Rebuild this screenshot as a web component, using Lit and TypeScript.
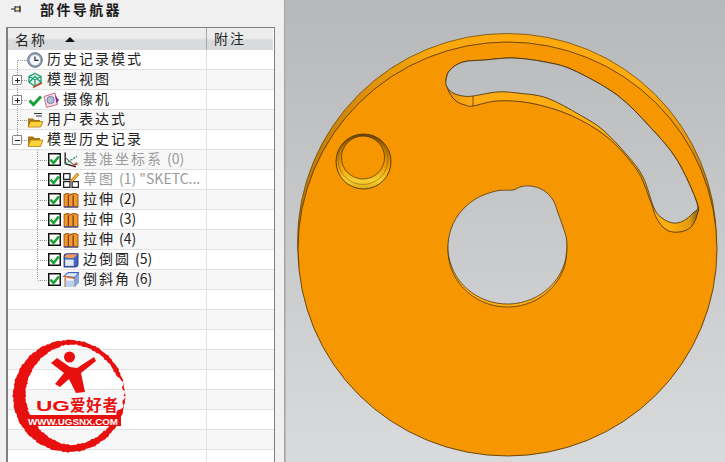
import { LitElement, html, css, svg } from "lit";
import { customElement } from "lit/decorators.js";

type Pt = [number, number];

// closed smooth curve through the points (catmull-rom to bezier)
const smooth = (p: Pt[]) => {
  const n = p.length;
  let d = `M${p[0][0]} ${p[0][1]}`;
  for (let i = 0; i < n; i++) {
    const a = p[(i - 1 + n) % n];
    const b = p[i];
    const c = p[(i + 1) % n];
    const e = p[(i + 2) % n];
    const c1x = b[0] + (c[0] - a[0]) / 6;
    const c1y = b[1] + (c[1] - a[1]) / 6;
    const c2x = c[0] - (e[0] - b[0]) / 6;
    const c2y = c[1] - (e[1] - b[1]) / 6;
    d += `C${c1x.toFixed(1)} ${c1y.toFixed(1)} ${c2x.toFixed(1)} ${c2y.toFixed(1)} ${c[0]} ${c[1]}`;
  }
  return d + "Z";
};

const slotTop: Pt[] = [
  [446, 80], [450, 70], [463, 62], [485, 60], [513, 58], [545, 62], [573, 70],
  [617, 95], [650, 127], [677, 160], [697, 203],
];
const slotBottom: Pt[] = [
  [693, 213], [683, 221], [673, 223], [662, 218], [654, 208], [643, 177], [627, 155],
  [603, 130], [580, 115], [547, 98], [517, 93], [497, 92], [473, 96], [463, 96],
  [453, 93], [447, 87],
];
const wallEdge: Pt[] = [
  [697, 215], [692, 226], [684, 231], [673, 232], [664, 228], [656, 217], [650, 200],
  [637, 170], [607, 137], [570, 115], [530, 103], [497, 101], [473, 106], [465, 105],
  [456, 101], [449, 92],
];
// centre hole: the key bump at the upper right, then a plain circle round the rest
const hole: Pt[] = [
  [513, 190], [520, 187], [530, 186], [543, 190], [553, 200], [558, 213], [563, 227],
  ...Array.from({ length: 13 }, (_, i): Pt => {
    const a = ((-5 + i * 22) * Math.PI) / 180;
    return [+(507.5 + 59.5 * Math.cos(a)).toFixed(1), +(247 + 57 * Math.sin(a)).toFixed(1)];
  }),
];

// brush ring of the logo, thick on the left and nearly gone on the right
const brushRing = () => {
  const outer: string[] = [];
  const inner: string[] = [];
  const cx = 69;
  const cy = 396;
  for (let i = 0; i <= 150; i++) {
    const a = (i / 150) * Math.PI * 2;
    const noise = Math.sin(i * 2.7) * 0.9 + Math.sin(i * 7.3) * 0.7;
    const c = Math.cos(a);
    const s = Math.sin(a);
    const left = Math.max(0, -c);
    const low = Math.max(0, s) * 2.5;
    const gap = Math.abs(Math.atan2(s, c) + 0.05) < 0.32 ? (i % 4 < 2 ? 0.2 : 2) : 4.5;
    const t = gap + left * 8 + low + noise * (gap < 3 ? 0.2 : 1);
    const r = 56 + noise * 0.5;
    outer.push(`${(cx + r * c).toFixed(1)} ${(cy + r * s).toFixed(1)}`);
    inner.unshift(`${(cx + (r - t) * c).toFixed(1)} ${(cy + (r - t) * s).toFixed(1)}`);
  }
  return `M${outer.join("L")}ZM${inner.join("L")}Z`;
};

const icons: Record<string, unknown> = {
  clock: svg`<circle cx="8" cy="8" r="7.300" fill="#8fa3b8" stroke="#5f6f84"/><circle cx="8" cy="8" r="5.300" fill="#f4f6fa"/><path d="M8 4.500V8.400H11.500" fill="none" stroke="#222" stroke-width="1.200"/>`,
  cube: svg`<path d="M8 1.500L14 4.500V10.500L8 14L2 10.500V4.500ZM2 4.500L8 7.500L14 4.500M8 7.500V14M2 10.500L8 4.500L14 10.500" fill="#d8f0e4" fill-opacity=".5" stroke="#17a06a" stroke-width="1.300"/><path d="M6 15.500L15 11" stroke="#d8402c" stroke-width="1.400"/>`,
  camera: svg`<path d="M1 4.500L12 1L14.500 12.500L3.500 15.500Z" fill="#f6dfe8" stroke="#c86a92"/><circle cx="7.500" cy="8" r="3.600" fill="#b4bfd2" stroke="#6f7fa0"/><path d="M12 3L16 8L13.500 11.500Z" fill="#7d2d96"/>`,
  check: svg`<path d="M2.500 8.500L6.500 12.500L14 4.500" fill="none" stroke="#16a035" stroke-width="3"/>`,
  exprFolder: svg`<path d="M7 1.500H15M9 4H15" stroke="#333" stroke-width="1.200"/><path d="M1 6.500H6L7.500 8H13V14.500H1Z" fill="#a8781a"/><path d="M3.500 9.500H16L13.500 15H1Z" fill="#ffd23c" stroke="#a87a10" stroke-width=".8"/>`,
  folder: svg`<path d="M1 4.500H6L7.500 6H13V14H1Z" fill="#a8781a"/><path d="M3.500 8H16L13.500 14.500H1Z" fill="#ffd23c" stroke="#a87a10" stroke-width=".8"/>`,
  datum: svg`<path d="M3 1.500V12L13 15" fill="none" stroke="#222" stroke-width="1.300"/><path d="M3 12L14 5" stroke="#1a9a50" stroke-width="1.200" stroke-dasharray="2 1"/><path d="M3 6L11 13L14 11" fill="none" stroke="#666" stroke-width="1"/><path d="M10 14L15 12" stroke="#d8402c" stroke-width="1.200"/>`,
  sketch: svg`<path d="M1.500 2.500H7.500V8H1.500ZM1.500 10H7.500V15.500H1.500ZM9.500 10H15.500V15.500H9.500Z" fill="#fff" stroke="#222" stroke-width="1.200"/><path d="M8 9L14 2L16 3.500L10 10Z" fill="#f2b52c" stroke="#b0601a" stroke-width=".7"/>`,
  extrude: svg`<path d="M2 3.500Q5 1.500 8 3.500Q11 1.500 15 3.500V15H2Z" fill="#f29a2e" stroke="#a85a16"/><path d="M6 4V14.500M10.500 4V14.500" stroke="#7a3c10" stroke-width="1.200"/><path d="M2 15H15" stroke="#3b4a90" stroke-width="1.200"/>`,
  blend: svg`<path d="M2 5Q2 2.500 5 2.500H15V12Q15 15 12 15H2Z" fill="#3f68c4" stroke="#2a3f80"/><path d="M2.500 5.500Q3 3 5 3H14.500L11 6.500H4Z" fill="#f29a5c"/><path d="M3 8H11V14H3Z" fill="#e6e9f2"/>`,
  chamfer: svg`<path d="M1.500 5L6 1.500H16L12 6Z" fill="#e8eef8" stroke="#3f68c4"/><path d="M2 5L14 7.500M3 6V15M12 6.500V15" stroke="#d8703c" stroke-width="1.400"/><path d="M3 9H12V15H3Z" fill="#9dc0ea" fill-opacity=".7"/><path d="M12 6L16 2V11L12 15" fill="#7fa6de"/>`,
};

type Row = {
  label: string;
  latin?: string;
  icon: string;
  child?: boolean;
  expander?: "plus" | "minus";
  last?: boolean;
  first?: boolean;
  mark?: boolean;
  grey?: boolean;
};

const rows: Row[] = [
  { label: "历史记录模式", icon: "clock", first: true },
  { label: "模型视图", icon: "cube", expander: "plus" },
  { label: "摄像机", icon: "camera", expander: "plus", mark: true },
  { label: "用户表达式", icon: "exprFolder" },
  { label: "模型历史记录", icon: "folder", expander: "minus", last: true },
  { label: "基准坐标系", latin: "(0)", icon: "datum", child: true, grey: true },
  { label: "草图", latin: '(1) "SKETC...', icon: "sketch", child: true, grey: true },
  { label: "拉伸", latin: "(2)", icon: "extrude", child: true },
  { label: "拉伸", latin: "(3)", icon: "extrude", child: true },
  { label: "拉伸", latin: "(4)", icon: "extrude", child: true },
  { label: "边倒圆", latin: "(5)", icon: "blend", child: true },
  { label: "倒斜角", latin: "(6)", icon: "chamfer", child: true, last: true },
  ...Array.from({ length: 9 }, () => ({ label: "", icon: "" })),
];

@customElement("app-root")
export class AppRoot extends LitElement {
  static styles = css`
    :host {
      display: block;
      width: 725px;
      height: 462px;
      overflow: hidden;
      font-family: "Noto Sans CJK SC", "Noto Sans", sans-serif;
      color: #222;
    }
    .page {
      display: flex;
      height: 462px;
    }
    .panel {
      position: relative;
      flex: none;
      width: 284px;
      background: #f0f0f0;
      box-sizing: border-box;
      padding-left: 6px;
      overflow: hidden;
    }
    .title {
      display: flex;
      align-items: center;
      height: 18px;
      margin-left: -1px;
      margin-bottom: 9px;
      font-size: 14px;
      font-weight: 700;
      letter-spacing: 2.4px;
      color: #1c1c1c;
    }
    .pin {
      width: 12px;
      height: 10px;
      margin-left: 6px;
      margin-right: 17px;
    }
    .tree {
      width: 269px;
      box-sizing: border-box;
      height: 435px;
      background: #fff;
      border: 1px solid #7f7f7f;
      border-width: 1px 1px 0 2px;
      overflow: hidden;
    }
    .head {
      display: flex;
      height: 22px;
      box-sizing: border-box;
      font-size: 14px;
      letter-spacing: 2px;
      line-height: 20px;
      background: linear-gradient(#eeeeee 0, #ececec 45%, #d9dadb 55%, #d9dadb 100%);
      margin-right: 1px;
    }
    .head .name {
      display: flex;
      align-items: center;
      width: 199px;
      padding-left: 7px;
      box-sizing: border-box;
      border-right: 1px solid #a8a8a8;
    }
    .head .note {
      padding-left: 7px;
    }
    .sort {
      width: 0;
      height: 0;
      margin-left: 18px;
      border: 5px solid transparent;
      border-top: 0;
      border-bottom: 5px solid #111;
    }
    .row {
      display: flex;
      height: 20px;
      box-sizing: border-box;
      border-bottom: 1px solid #e2e2e2;
      font-size: 14px;
      letter-spacing: 2px;
      white-space: nowrap;
    }
    .row:nth-child(even) {
      background: #f7f7f7;
    }
    .cell {
      display: flex;
      align-items: center;
      width: 199px;
      box-sizing: border-box;
      border-right: 1px solid #e2e2e2;
      line-height: 19px;
    }
    .gutter {
      display: block;
      flex: none;
      align-self: flex-start;
      height: 20px;
    }
    .icon {
      flex: none;
      width: 16px;
      height: 16px;
    }
    .box {
      flex: none;
      width: 13px;
      height: 13px;
      margin-right: 1px;
    }
    .label {
      margin-left: 4px;
      margin-top: -2px;
    }
    .latin {
      letter-spacing: 0;
      margin-left: 4px;
    }
    .row.child .icon {
      width: 17px;
      height: 17px;
    }
    .row.grey .label {
      color: #9a9a9a;
    }
    .logo {
      position: absolute;
      left: 0;
      top: 325px;
      width: 150px;
      height: 137px;
    }
    .logo text {
      font-family: "Liberation Sans", "Noto Sans CJK SC", sans-serif;
      font-weight: 700;
    }
    .divider {
      flex: none;
      width: 2px;
      background: linear-gradient(90deg, #9a9a9a, #c4c4c4);
    }
    .view {
      flex: 1;
      display: block;
      height: 462px;
    }
  `;

  gutter(r: Row) {
    if (r.child) {
      const bottom = r.last ? 10 : 20;
      return html`<svg class="gutter" width="40" height="20" shape-rendering="crispEdges">
        <path d="M29.500 0V${bottom}M30 10.500H39" stroke="#999" stroke-dasharray="1 1" fill="none" />
      </svg>`;
    }
    if (!r.label) return html`<svg class="gutter" width="19" height="20"></svg>`;
    const top = r.first ? 10 : 0;
    const bottom = r.last ? 10 : 20;
    return html`<svg class="gutter" width="19" height="20" shape-rendering="crispEdges">
      <path d="M9.500 ${top}V${bottom}M10 10.500H19" stroke="#999" stroke-dasharray="1 1" fill="none" />
      ${r.expander
        ? svg`<rect x="4.500" y="5.500" width="9" height="9" rx="1.500" fill="#fdfdfd" stroke="#8a8a8a" />
            <path d="M6.500 10.500H11.500${r.expander === "plus" ? "M9 8V13" : ""}" stroke="#222" />`
        : ""}
    </svg>`;
  }

  renderRow(r: Row) {
    const cls = `row ${r.child ? "child" : ""} ${r.grey ? "grey" : ""}`;
    return html`<div class=${cls}>
      <div class="cell">
        ${this.gutter(r)}
        ${r.child
          ? html`<svg class="box" viewBox="0 0 13 13">
              <rect x=".75" y=".75" width="11.500" height="11.500" fill="#fff" stroke="#111" stroke-width="1.500" />
              <path d="M2.500 6.500L5.500 10L10.800 3.500" fill="none" stroke="#14a534" stroke-width="2.600" />
            </svg>`
          : ""}
        ${r.mark ? html`<svg class="icon" viewBox="0 0 16 16">${icons.check}</svg>` : ""}
        ${r.icon ? html`<svg class="icon" viewBox="0 0 16 16">${icons[r.icon]}</svg>` : ""}
        ${r.label
          ? html`<span class="label">${r.label}${r.latin ? html`<span class="latin">${r.latin}</span>` : ""}</span>`
          : ""}
      </div>
    </div>`;
  }

  renderLogo() {
    return html`<svg class="logo" viewBox="0 325 150 137">
      <path d=${brushRing()} fill="#e8100f" fill-rule="evenodd" />
      <circle cx="69.500" cy="357" r="5.500" fill="#e8100f" />
      <path d="M51 363L57 358L70 367L77 368L94 357L96 361L81 373L85 392L76 393L69 379L60 387L55 384L64 373Z" fill="#e8100f" />
      <text x="36" y="411" font-size="15" fill="#e8100f" textLength="34" lengthAdjust="spacingAndGlyphs">UG</text>
      <text x="70" y="411" font-size="15.500" fill="#e8100f" textLength="48">爱好者</text>
      <rect x="25" y="415" width="96" height="11" fill="#e8100f" />
      <text x="28" y="424.500" font-size="9.500" fill="#fff" textLength="90" lengthAdjust="spacingAndGlyphs">WWW.UGSNX.COM</text>
    </svg>`;
  }

  renderModel() {
    const slot = smooth([...slotTop, ...slotBottom]);
    const wall = smooth([...wallEdge, ...slotTop]);
    const holeD = smooth(hole);
    return html`<svg class="view" viewBox="286 0 439 462">
      <defs>
        <linearGradient id="bg" gradientUnits="userSpaceOnUse" x1="0" y1="0" x2="0" y2="462">
          <stop offset="0" stop-color="#b7b8ba" />
          <stop offset="1" stop-color="#d9dadb" />
        </linearGradient>
        <linearGradient id="rim" gradientUnits="userSpaceOnUse" x1="298" y1="0" x2="717" y2="0">
          <stop offset="0" stop-color="#b97a05" />
          <stop offset=".12" stop-color="#d58a08" />
          <stop offset=".32" stop-color="#fba80e" />
          <stop offset=".8" stop-color="#ffab0f" />
          <stop offset=".93" stop-color="#e8980a" />
          <stop offset="1" stop-color="#a97408" />
        </linearGradient>
        <linearGradient id="wall" gradientUnits="userSpaceOnUse" x1="446" y1="0" x2="697" y2="0">
          <stop offset="0" stop-color="#e3920c" />
          <stop offset=".1" stop-color="#ffac12" />
          <stop offset=".9" stop-color="#ffad10" />
          <stop offset=".97" stop-color="#e49a0c" />
          <stop offset="1" stop-color="#8a6a10" />
        </linearGradient>
        <linearGradient id="boss" x1="0" y1="0" x2="0" y2="1">
          <stop offset="0" stop-color="#6f4300" />
          <stop offset=".25" stop-color="#b87400" />
          <stop offset=".6" stop-color="#ee9c08" />
          <stop offset=".85" stop-color="#f8d030" />
          <stop offset="1" stop-color="#e0a818" />
        </linearGradient>
      </defs>
      <rect x="286" y="0" width="439" height="462" fill="url(#bg)" />
      <ellipse cx="507" cy="241.500" rx="209.500" ry="208" fill="url(#rim)" stroke="#5e3d05" stroke-width=".7" />
      <ellipse cx="507.500" cy="249" rx="209.500" ry="207" fill="#f69600" stroke="#4a3005" stroke-width=".8" />
      <path d=${wall} fill="url(#wall)" stroke="#3c2a08" stroke-width=".8" />
      <path d=${slot} fill="url(#bg)" stroke="#3c2a08" stroke-width=".8" />
      <path d="M473 96V106" stroke="#3c2a08" stroke-width=".7" />
      <path d=${holeD} transform="translate(0 3)" fill="#ffad10" stroke="#3c2a08" stroke-width=".7" />
      <path d=${holeD} fill="url(#bg)" stroke="#3c2a08" stroke-width=".7" />
      <circle cx="363.500" cy="161.500" r="27.500" fill="url(#boss)" stroke="#3c2a08" stroke-width=".8" />
      <circle cx="363" cy="159.500" r="25" fill="none" stroke="#7a5008" stroke-width=".5" />
      <circle cx="363" cy="157.500" r="21.500" fill="#f69600" stroke="#4a3005" stroke-width=".7" />
    </svg>`;
  }

  render() {
    return html`<div class="page">
      <div class="panel">
        <div class="title">
          <svg class="pin" viewBox="0 0 12 10">
            <path d="M0 5H4M4 2V8M4 3H9V7H4M9 1.500V8.500" fill="#f4e9a8" stroke="#222" />
          </svg>
          部件导航器
        </div>
        <div class="tree">
          <div class="head">
            <div class="name">名称<span class="sort"></span></div>
            <div class="note">附注</div>
          </div>
          <div>${rows.map((r) => this.renderRow(r))}</div>
        </div>
        ${this.renderLogo()}
      </div>
      <div class="divider"></div>
      ${this.renderModel()}
    </div>`;
  }
}
